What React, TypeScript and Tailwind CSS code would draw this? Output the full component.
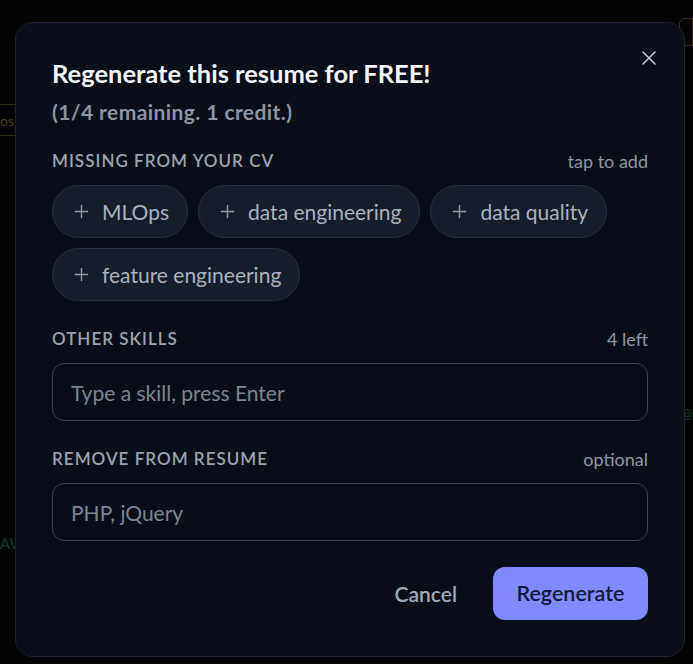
import React from 'react';

const missing = ['MLOps', 'data engineering', 'data quality', 'feature engineering'];

const PlusIcon = () => (
    <svg width="15" height="15" viewBox="0 0 16 16" fill="none" stroke="currentColor" strokeWidth="1.5" strokeLinecap="round">
        <path d="M8 1.5v13M1.5 8h13" />
    </svg>
);

const SectionLabel = ({ label, hint }: { label: string; hint: string }) => (
    <div className="flex items-center justify-between leading-6">
        <span className="text-[17px] font-semibold tracking-[0.06em] text-[#9aa2b0]">{label}</span>
        <span className="text-[18px] text-[#8e96a3]">{hint}</span>
    </div>
);

export default function App() {
    return (
        <div
            className="relative min-h-[664px] w-[693px] overflow-hidden bg-[#030304]"
            style={{ fontFamily: 'Lato, "Open Sans", sans-serif' }}
        >
            {/* dimmed page behind the dialog */}
            <div className="absolute left-0 top-[104px] h-[32px] w-[16px] border-y border-[#2a2410] text-[14px] leading-[32px] text-[#4a3c12]">os</div>
            <div className="absolute left-0 top-[532px] text-[15px] text-[#0f3f26]">AV</div>
            <div className="absolute right-0 top-[18px] h-[28px] w-[14px] rounded-tl-md border border-[#3a2e0c]" />
            <div className="absolute right-0 top-[402px] text-[14px] text-[#0f3f26]">@</div>

            <div className="relative ml-[15px] mt-[22px] flex w-[670px] flex-col rounded-[18px] border border-[#1b2130] bg-[#0a0e18] px-9 pb-9 pt-[34px]">
                <div className="flex items-start justify-between">
                    <div className="flex flex-col">
                        <h2 className="text-[25.5px] font-bold leading-8 text-[#f2f4f8]">Regenerate this resume for FREE!</h2>
                        <p className="mt-[11px] text-[21px] font-bold leading-6 tracking-[0.02em] text-[#8c94a2]">(1/4 remaining. 1 credit.)</p>
                    </div>
                    <button className="-mr-2 -mt-[6px] text-[#c3c8d1]" aria-label="Close">
                        <svg width="14" height="14" viewBox="0 0 14 14" fill="none" stroke="currentColor" strokeWidth="1.6" strokeLinecap="round">
                            <path d="M1 1l12 12M13 1L1 13" />
                        </svg>
                    </button>
                </div>

                <div className="mt-[25px]">
                    <SectionLabel label="MISSING FROM YOUR CV" hint="tap to add" />
                </div>
                <div className="mt-3 flex flex-wrap gap-[10px]">
                    {missing.map((m) => (
                        <button
                            key={m}
                            className="flex h-[53px] items-center gap-[13px] rounded-full border border-[#283041] bg-[#161d2a] pl-[21px] pr-[18px] text-[21px] text-[#a9b1be]"
                        >
                            <span className="text-[#8e96a4]"><PlusIcon /></span>
                            {m}
                        </button>
                    ))}
                </div>

                <div className="mt-[26px]">
                    <SectionLabel label="OTHER SKILLS" hint="4 left" />
                </div>
                <input
                    className="mt-3 h-[58px] rounded-[12px] border border-[#3a4252] bg-transparent px-[18px] text-[21px] text-[#d0d5dd] outline-none placeholder:text-[#7c8491]"
                    placeholder="Type a skill, press Enter"
                />

                <div className="mt-[26px]">
                    <SectionLabel label="REMOVE FROM RESUME" hint="optional" />
                </div>
                <input
                    className="mt-3 h-[58px] rounded-[12px] border border-[#3a4252] bg-transparent px-[18px] text-[21px] text-[#d0d5dd] outline-none placeholder:text-[#7c8491]"
                    placeholder="PHP, jQuery"
                />

                <div className="mt-[26px] flex items-center justify-end gap-5">
                    <button className="px-4 text-[21px] font-semibold text-[#a2a9b5]">Cancel</button>
                    <button className="h-[53px] w-[155px] rounded-[12px] bg-[#8189ff] text-[21.5px] font-semibold text-[#131938]">
                        Regenerate
                    </button>
                </div>
            </div>
        </div>
    );
}
